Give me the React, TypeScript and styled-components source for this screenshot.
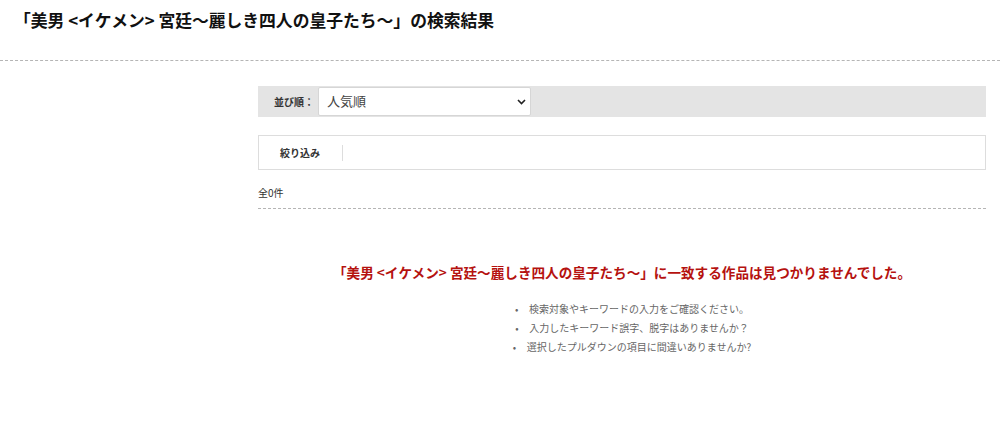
import React from 'react';
import styled, { createGlobalStyle } from 'styled-components';

const GlobalStyle = createGlobalStyle`
  body {
    margin: 0;
    background: #ffffff;
    font-family: "Noto Sans CJK JP", "Noto Sans", sans-serif;
    color: #333333;
  }
`;

const hints: string[] = [
  '検索対象やキーワードの入力をご確認ください。',
  '入力したキーワード誤字、脱字はありませんか？',
  '選択したプルダウンの項目に間違いありませんか?',
];

const keyword = '美男 <イケメン> 宮廷〜麗しき四人の皇子たち〜';

const App: React.FC = () => {
  const [sortType, setSortType] = React.useState<string>('popular');

  return (
    <>
      <GlobalStyle />
      <Header>
        <Title>「{keyword}」の検索結果</Title>
      </Header>
      <Main>
        <Side />
        <Content>
          <SortBar>
            <SortLabel>並び順：</SortLabel>
            <SelectWrap>
              <Select value={sortType} onChange={(e) => setSortType(e.target.value)}>
                <option value="popular">人気順</option>
                <option value="new">新着順</option>
                <option value="price">価格の安い順</option>
              </Select>
              <Chevron width="9" height="6" viewBox="0 0 9 6">
                <path d="M1 1l3.5 3.5L8 1" fill="none" stroke="#222" strokeWidth="1.6" />
              </Chevron>
            </SelectWrap>
          </SortBar>
          <FilterBox>
            <FilterLabel>絞り込み</FilterLabel>
            <FilterDivider />
          </FilterBox>
          <Count>全0件</Count>
          <NotFound>「{keyword}」に一致する作品は見つかりませんでした。</NotFound>
          <HintList>
            {hints.map((text) => (
              <HintItem key={text}>{text}</HintItem>
            ))}
          </HintList>
        </Content>
      </Main>
    </>
  );
};

const Header = styled.header`
  height: 61px;
  border-bottom: 1px dashed #b5b5b5;
  padding: 9px 0 0 14px;
  box-sizing: border-box;
`;
const Title = styled.h1`
  margin: 0;
  font-size: 16.8px;
  line-height: 22px;
  font-weight: bold;
  color: #111111;
`;
const Main = styled.div`
  display: flex;
`;
const Side = styled.aside`
  width: 258px;
  flex-shrink: 0;
`;
const Content = styled.div`
  width: 728px;
  padding-top: 25px;
`;
const SortBar = styled.div`
  display: flex;
  align-items: center;
  height: 31px;
  background: #e4e4e4;
  padding-left: 16px;
`;
const SortLabel = styled.span`
  width: 44px;
  font-size: 10px;
  font-weight: bold;
  color: #333333;
`;
const SelectWrap = styled.div`
  position: relative;
  width: 213px;
  height: 29px;
`;
const Select = styled.select`
  appearance: none;
  width: 100%;
  height: 100%;
  border: 1px solid #d6d6d6;
  border-radius: 2px;
  background: #ffffff;
  padding: 0 0 2px 8px;
  font-family: "Noto Sans CJK JP", sans-serif;
  font-size: 13px;
  color: #444444;
  outline: none;
`;
const Chevron = styled.svg`
  position: absolute;
  right: 5px;
  top: 12px;
  pointer-events: none;
`;
const FilterBox = styled.div`
  display: flex;
  align-items: center;
  height: 35px;
  margin-top: 18px;
  border: 1px solid #dddddd;
  box-sizing: border-box;
  padding-left: 21px;
`;
const FilterLabel = styled.span`
  font-size: 10px;
  font-weight: bold;
  color: #333333;
`;
const FilterDivider = styled.span`
  width: 1px;
  height: 16px;
  background: #dddddd;
  margin-left: 22px;
`;
const Count = styled.div`
  margin-top: 15px;
  font-size: 10px;
  line-height: 16px;
  color: #333333;
  padding-bottom: 7px;
  border-bottom: 1px dashed #b5b5b5;
`;
const NotFound = styled.p`
  margin: 53px 0 0;
  text-align: center;
  font-size: 13.6px;
  line-height: 20px;
  font-weight: bold;
  color: #b5120f;
`;
const HintList = styled.ul`
  margin: 17px 0 0;
  padding: 0 0 0 20px;
  list-style: none;
  text-align: center;
`;
const HintItem = styled.li`
  font-size: 10px;
  line-height: 19px;
  color: #666666;
  &::before {
    content: '•';
    display: inline-block;
    width: 14px;
    text-align: left;
    color: #666666;
  }
`;

export default App;
